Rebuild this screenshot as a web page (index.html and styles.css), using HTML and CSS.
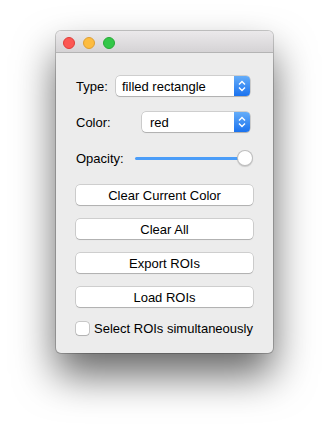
FILE: index.html
```html
<!DOCTYPE html>
<html>
<head>
<meta charset="utf-8">
<link rel="stylesheet" href="styles.css">
</head>
<body>
<div class="window">
  <div class="titlebar">
    <span class="light red"></span>
    <span class="light yellow"></span>
    <span class="light green"></span>
  </div>
  <div class="content">
    <div class="row">
      <span class="label type-label">Type:</span>
      <div class="popup popup-type">
        <span class="popup-text">filled rectangle</span>
        <span class="stepper"><svg width="8" height="12" viewBox="0 0 8 12"><path d="M1 4.5 L4 1.5 L7 4.5 M1 7.5 L4 10.5 L7 7.5" fill="none" stroke="#fff" stroke-width="1.4"/></svg></span>
      </div>
    </div>
    <div class="row">
      <span class="label color-label">Color:</span>
      <div class="popup popup-color">
        <span class="popup-text">red</span>
        <span class="stepper"><svg width="8" height="12" viewBox="0 0 8 12"><path d="M1 4.5 L4 1.5 L7 4.5 M1 7.5 L4 10.5 L7 7.5" fill="none" stroke="#fff" stroke-width="1.4"/></svg></span>
      </div>
    </div>
    <div class="row">
      <span class="label opacity-label">Opacity:</span>
      <div class="slider">
        <div class="track"></div>
        <div class="knob"></div>
      </div>
    </div>
    <div class="buttons">
      <button class="btn">Clear Current Color</button>
      <button class="btn">Clear All</button>
      <button class="btn">Export ROIs</button>
      <button class="btn">Load ROIs</button>
    </div>
    <label class="check">
      <span class="box"></span>
      <span>Select ROIs simultaneously</span>
    </label>
  </div>
</div>
</body>
</html>
```
FILE: styles.css
```css
html, body {
  margin: 0;
  padding: 0;
  background: #ffffff;
}
body {
  width: 329px;
  height: 434px;
  overflow: hidden;
  padding: 31px 0 0 56px;
  box-sizing: border-box;
  font-family: "Liberation Sans", Arial, sans-serif;
  font-size: 13px;
  color: #000;
}
.window {
  width: 217px;
  height: 322px;
  background: #ececec;
  border-radius: 5px;
  box-shadow: 0 0 0 1px rgba(0,0,0,0.2), 0 22px 40px rgba(0,0,0,0.6);
  overflow: hidden;
  display: flex;
  flex-direction: column;
}
.titlebar {
  height: 22px;
  box-sizing: border-box;
  background: linear-gradient(#ebe9eb, #d5d3d5);
  border-bottom: 1px solid #b4b4b4;
  display: flex;
  align-items: center;
  padding-left: 7px;
  gap: 8px;
  padding-top: 2px;
}
.light {
  width: 12px;
  height: 12px;
  border-radius: 50%;
  box-sizing: border-box;
}
.red { background: #fc5753; border: 1px solid #df3d39; }
.yellow { background: #fdbc40; border: 1px solid #de9f34; }
.green { background: #33c748; border: 1px solid #27aa35; }
.content {
  padding: 23px 20px 0 20px;
  display: flex;
  flex-direction: column;
}
.row {
  display: flex;
  align-items: center;
  height: 20px;
  margin-bottom: 16px;
}
.label {
  flex: none;
}
.type-label { width: 40px; }
.color-label { width: 66px; }
.opacity-label { width: 59px; }
.popup {
  height: 20px;
  box-sizing: border-box;
  background: #fff;
  border-radius: 4px;
  box-shadow: 0 0 0 0.5px rgba(0,0,0,0.25), 0 1px 1px rgba(0,0,0,0.15);
  display: flex;
  align-items: center;
  justify-content: space-between;
  overflow: hidden;
}
.popup-type { width: 134px; }
.popup-type .popup-text { padding-left: 6px; }
.popup-color { width: 108px; }
.popup-color .popup-text { padding-left: 8px; }
.stepper {
  width: 16px;
  height: 20px;
  background: linear-gradient(#65adf9, #1a72ef);
  display: flex;
  align-items: center;
  justify-content: center;
}
.slider {
  position: relative;
  width: 118px;
  height: 20px;
  display: flex;
  align-items: center;
}
.track {
  width: 108px;
  height: 3px;
  border-radius: 2px;
  background: #4b9df8;
}
.knob {
  position: absolute;
  right: 0;
  top: 2px;
  width: 16px;
  height: 16px;
  box-sizing: border-box;
  border-radius: 50%;
  background: #fff;
  border: 0.5px solid rgba(0,0,0,0.25);
  box-shadow: 0 1px 1px rgba(0,0,0,0.15);
}
.buttons {
  display: flex;
  flex-direction: column;
  gap: 14px;
  margin-top: 1px;
}
.btn {
  height: 20px;
  width: 177px;
  padding: 0;
  font-family: inherit;
  font-size: 13px;
  color: #000;
  background: #fff;
  border: none;
  border-radius: 4px;
  box-shadow: 0 0 0 0.5px rgba(0,0,0,0.25), 0 1px 1px rgba(0,0,0,0.15);
}
.check {
  display: flex;
  align-items: center;
  gap: 5px;
  margin-top: 14px;
}
.box {
  width: 13px;
  height: 13px;
  box-sizing: border-box;
  background: #fff;
  border-radius: 3px;
  box-shadow: 0 0 0 0.5px rgba(0,0,0,0.3), 0 1px 1px rgba(0,0,0,0.12);
}
```
